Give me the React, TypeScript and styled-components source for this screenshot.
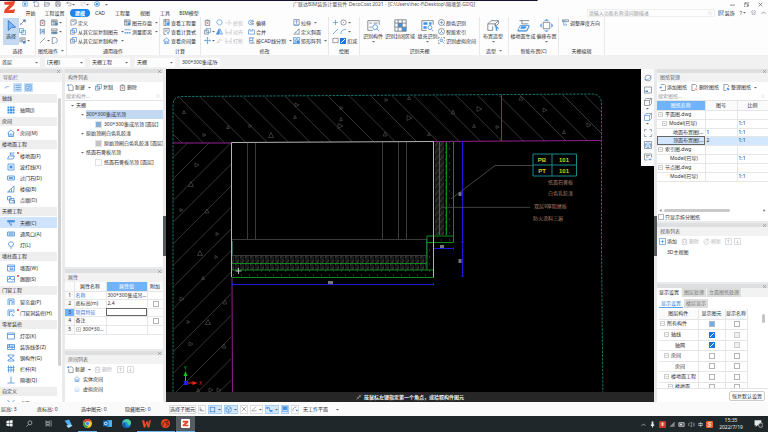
import React from "react";
import styled, { createGlobalStyle, css } from "styled-components";

const Global = createGlobalStyle`
  *, *::before, *::after { box-sizing: border-box; }
  body { margin: 0; background: #f0f0f0; }
  body, button, input, select, table {
    font-family: "Noto Sans", "Noto Sans CJK SC", sans-serif;
    font-size: 5px;
    line-height: 8px;
    color: #2e2e2e;
  }
  button { border: 0; background: none; padding: 0; margin: 0; white-space: nowrap; }
  ul { list-style: none; margin: 0; padding: 0; }
`;

/* ---------- icons: grey strokes, blue strokes, blue fill ---------- */

type Glyph = { g?: string; b?: string; f?: string; r?: string };
const glyphs: Record<string, Glyph> = {
  pin: { b: "M2 2h12v12H2z", f: "M8 4l4 4h-2v4H6V8H4z" },
  file: { g: "M6 2h5l3 3v10H4V7", f: "M1 1h4v4H1z" },
  folder: { g: "M1 3h5l2 2h6v3M1 3v11h11l3-6H4l-3 6" },
  save: { g: "M2 2h10l2 2v10H2zM5 2v4h6V2M4 14V9h8v5" },
  undo: { g: "M5 2L2 5l3 3M2 5h8a4 4 0 010 8H6" },
  redo: { g: "M11 2l3 3-3 3M14 5H6a4 4 0 000 8h4" },
  globe: { b: "M8 1a7 7 0 100 14A7 7 0 008 1M3 10c4 2 8-1 10-6M4 4c3 0 6 4 7 9", f: "M5 6h6v5H5z" },
  pick: { g: "M2 14L13 3M9 3h5v5M3 9l4 4", f: "M10 1h5v5h-5z" },
  copy: { b: "M1 1h9v9H1zM6 6h9v9H6z" },
  copyg: { g: "M1 5h9v9H1z", b: "M5 1h10v9H5z" },
  list: { g: "M2 2h12v9H2zM4 5h8M4 8h5", f: "M9 9h6v6H9z" },
  trash: { g: "M2 4h12M6 4V2h4v2M3 4v11h10V4", r: "M6 7l4 5M10 7l-4 5" },
  trashg: { g: "M2 4h12M6 4V2h4v2M3 4v11h10V4M6 7v5M10 7v5" },
  align: { g: "M3 1v14M12 1v14", b: "M3 4h9M3 11h9", f: "M6 6h5v3H6z" },
  line: { g: "M2 14L14 2" },
  grid4: { g: "M1 2h13v12H1zM1 6h13M5 2v12M9 2v12", f: "M9 8h6v6H9z" },
  layers: { g: "M1 2h13v4H1zM1 9h13v4H1z", f: "M3 9h10v4H3z" },
  doc: { g: "M3 1h7l4 4v4M3 1v14h5", b: "M10 11l2 3 3-5" },
  define: { g: "M2 2h12v5M2 2v12h4M5 5h6", b: "M8 13l6-6 1 2-5 5z" },
  db: { g: "M1 2h13v12H1zM1 6h13M5 2v12", f: "M8 8h6v6H8z" },
  ruler: { b: "M1 4h14M1 11h14M3 9v4M8 9v4M13 9v4" },
  calc: { g: "M2 1h12v9M2 1v14h5M2 5h12M6 1v14", f: "M8 8h7v7H8z" },
  calc2: { g: "M2 1h12v9M2 1v14h5M5 5h6M5 8h3", b: "M9 10h5M9 13h5" },
  house: { b: "M1 8l7-6 7 6M3 7v8h10V7M6 15v-5h4v5" },
  rotate: { b: "M6 2a6 6 0 104 0M6 2h4" },
  mirror: { b: "M7 2v12H1zM9 2l6 12H9z", f: "M7 2v12H1z" },
  move: { b: "M8 1v14M1 8h14M6 3l2-2 2 2M6 13l2 2 2-2M3 6L1 8l2 2M13 6l2 2-2 2" },
  trim: { g: "M1 9h5M9 9h6M9 2v12" },
  brk: { g: "M2 2v12h4M14 2v12h-4M2 10h12" },
  cut: { g: "M1 12h6M9 4L5 14M10 7h5" },
  offset: { b: "M13 3H6a5 5 0 000 10h7", g: "M14 6H8a2 2 0 000 4h6" },
  merge: { b: "M1 14V5l4-2v4h5V3l5 2v9z" },
  split: { g: "M2 2h12M4 14h11", b: "M4 2v12M11 2v12M4 8h7" },
  stretch: { b: "M2 14h12M8 11V4M5 6l3-3 3 3", g: "M2 1h12v13H2z" },
  slope: { g: "M1 14h14M3 12L14 2v12", b: "M5 11l3-1" },
  array: { b: "M1 1h6v6H1zM9 1h6v6H9zM1 9h6v6H1zM9 9h6v6H1z", f: "M9 9h6v6H9z" },
  plus: { b: "M8 2v12M2 8h12" },
  circle: { g: "M8 2a6 6 0 100 12A6 6 0 008 2M8 7v2" },
  bline: { b: "M2 14L14 2" },
  fold: { b: "M5 7h9M2 10h5" },
  arc: { b: "M2 14Q2 3 14 3" },
  rect: { g: "M2 3h12v10H2z" },
  recog: { g: "M8 1a7 7 0 100 14A7 7 0 008 1", b: "M8 4v8M4 8h8M11 11l4 4" },
  index: { g: "M8 1a7 7 0 100 14A7 7 0 008 1", b: "M8 4v5M5 11l3-3 3 3" },
  virt: { g: "M1 4V1h3M12 1h3v3M4 15H1v-3M7 1h2M1 7v2M15 7v2", b: "M5 5h5v5H5zM10 10l5 5" },
  big1: { g: "M15 7V2H1v12h6M3 5h3M8 5h5M3 10h3", b: "M10 7a3 3 0 100 6 3 3 0 000-6M12 12l3 3" },
  big2: { g: "M1 1h14v14H1zM1 5h14M1 10h14M5 1v14M10 1v14", f: "M5 5h5v5H5zM10 10h5v5h-5z" },
  big3: { g: "M15 7V2H1v12h6", f: "M3 4h5v3H3zM10 4h3v3h-3zM3 9h4v3H3z", b: "M11 8a2.500 2.500 0 100 5 2.500 2.500 0 000-5M13 13l2 2" },
  big4: { g: "M1 14V6l4-4h9v4L10 9V6L14 2M1 6h9v2M1 14h6V9", f: "M10 7l5 5-3 0 1 3-2-1z" },
  big5: { g: "M3 2h12M6 2v4h8", b: "M4 8h11l-3 6H1zM1 14v1h11l3-6", f: "M5 9h7l-2 3H4z" },
  big6: { g: "M4 4h8v8H4z", f: "M8 0l3 2H5zM8 16l3-2H5zM0 8l2-3v6zM16 8l-2-3v6z" },
  thick: { g: "M1 2h14v4H1z", b: "M4 6v8h6M8 10l3 4M3 2v4M7 2v4" },
  gridb: { f: "M1 1h4v4H1zM6 1h4v4H6zM11 1h4v4h-4zM1 6h4v4H1zM6 6h4v4H6zM11 6h4v4h-4zM1 11h4v4H1zM6 11h4v4H6zM11 11h4v4h-4z" },
  floor: { b: "M5 2h10M7 2v4h7M4 8h11l-3 6H1z" },
  ring: { b: "M2 2h12v12H2z", f: "M5 5h6v6H5z" },
  slab: { b: "M1 4h14v8H1zM4 7h8v2H4z" },
  stair: { b: "M1 14L14 2v12zM5 11v3M9 7v7" },
  dots: { b: "M1 1h7v7H1zM5 5h9v9H5z", g: "M9 9h6v6" },
  ceil: { b: "M1 3h14M1 6h14M1 3v3M15 3v3M5 6v4h5", f: "M2 3h12v3H2zM6 11h4v2H6z" },
  vent: { b: "M1 4h14v8H1zM3 6h10M3 8h10M3 10h10" },
  rows: { b: "M1 3h2M5 3h10M1 8h2M5 8h10M1 13h2M5 13h10" },
  lamp: { b: "M8 2a4 4 0 00-2 8v2h4v-2a4 4 0 00-2-8M7 15h2" },
  wall: { b: "M1 2h14v12H1zM1 5h14M6 8h6v3H6z" },
  card: { b: "M2 2h12v12H2zM5 6h6M5 10l2 1 4-3" },
  skirt: { b: "M1 3h14v11H1zM1 10l5-3 4 3 5-2", f: "M4 5h4v3H4z" },
  curtain: { b: "M2 14V2h12v12M5 14V5h5v9M10 8h4" },
  door: { b: "M2 14V2h12v6M5 14V5h6M9 9l5 5M9 12l3 3" },
  strip: { b: "M1 2h14v12H1zM1 5h14" },
  mold: { b: "M1 3h14v10H1zM1 6h14M1 9h14M5 3v6M10 6v7" },
  steel: { b: "M2 2h12v2L9 7v3l5 2v2H2v-2l5-2V7L2 4z" },
  rail: { b: "M3 1v14M8 1v14M13 1v14M1 5h14M1 10h14" },
  part: { b: "M8 1v13M1 14h14" },
  point: { b: "M1 2l7 7 7-7M8 9v6" },
  up: { g: "M1 1h14v14H1zM8 12V4M5 7l3-3 3 3" },
  down: { g: "M1 1h14v14H1zM8 4v8M5 9l3 3 3-3" },
  refresh: { g: "M14 8a6 6 0 11-2-4M12 1v4H8M5 8l2 2 4-4" },
  add: { b: "M1 1h14v14H1zM8 4v8M4 8h8" },
  search: { g: "M7 2a5 5 0 100 10A5 5 0 007 2M11 11l4 4" },
  sheetadd: { g: "M4 1h8l3 3v11H4", b: "M1 8h6M4 5v6" },
  sheetdel: { g: "M8 15H2V1h8l3 3v4", r: "M9 10l5 5M14 10l-5 5" },
  sheetfix: { g: "M8 15H2V1h8l3 3v3", f: "M8 11l3-3 4 4-3 3z" },
  orbit: { g: "M8 2a6 6 0 100 12A6 6 0 008 2", b: "M1 11c3 3 14-3 13-8" },
  sheet: { g: "M1 2h14v12H1z", f: "M3 9h5v3H3z" },
  cube: { g: "M1 5h10v10H1zM1 5l3-4h11v10l-4 4M11 5l4-4" },
  cubeb: { b: "M1 5h10v10H1zM1 5l3-4h11v10l-4 4M11 5l4-4" },
  frame: { g: "M1 5V1h4M11 1h4v4M15 11v4h-4M5 15H1v-4" },
  boxed: { g: "M1 1h14v14H1z", b: "M8 3l5 3v5l-5 3-5-3V6zM3 6l5 3 5-3M8 9v5" },
  panel: { g: "M1 2h14v7M1 2v12h6M4 5h8M4 8h5", b: "M9 13h6M12 10v5" },
  ortho: { g: "M3 2v11h11M3 9h4v4" },
  sq: { b: "M3 3h10v10H3z", f: "M2 2h3v3H2zM11 2h3v3h-3zM2 11h3v3H2zM11 11h3v3h-3z" },
  hex: { b: "M8 1l6 3v8l-6 3-6-3V4zM2 4l6 4 6-4M8 8v7" },
  cross: { g: "M2 2l12 12M14 2L2 14" },
  angle: { g: "M13 2L2 13h13" },
  snap: { b: "M2 4h6v7h6", f: "M1 2h4v4H1zM9 9h6v4H9z" },
  inset: { b: "M1 1h14v14H1z", f: "M3 2h10v9H3z" },
  curve: { g: "M2 14C2 6 6 3 12 3M10 9l4 4", f: "M11 10h4v4h-4z" },
  shirt: { g: "M5 2L1 5l2 3 1-1v7h8V7l1 1 2-3-4-3-3 2z" },
};

const Svg = styled.svg<{ $s: number; $dim?: boolean }>`
  width: ${(p) => p.$s}px;
  height: ${(p) => p.$s}px;
  flex: none;
  display: block;
  opacity: ${(p) => (p.$dim ? 0.4 : 1)};
`;

const Icon = ({ n, s = 7, dim, w = 1.6 }: { n: string; s?: number; dim?: boolean; w?: number }) => {
  const k = glyphs[n];
  return (
    <Svg $s={s} $dim={dim} viewBox="0 0 16 16" fill="none" strokeWidth={w} aria-hidden>
      {k.f && <path d={k.f} fill="#3f93e6" />}
      {k.g && <path d={k.g} stroke="#6c7680" />}
      {k.b && <path d={k.b} stroke="#4a90d9" />}
      {k.r && <path d={k.r} stroke="#e0564c" />}
    </Svg>
  );
};

const Caret = () => (
  <Svg $s={3} viewBox="0 0 6 6" aria-hidden>
    <path d="M0 2h6L3 5z" fill="#666" />
  </Svg>
);

const CloseX = ({ s = 3 }: { s?: number }) => (
  <Svg $s={s} viewBox="0 0 6 6" aria-hidden>
    <path d="M0 0l6 6M6 0L0 6" stroke="#777" strokeWidth="1" />
  </Svg>
);

/* ---------- page frame ---------- */

const Page = styled.div`
  height: 100vh;
  display: flex;
  flex-direction: column;
  overflow: hidden;
`;

const Header = styled.header`
  display: grid;
  grid-template-columns: 22px 1fr auto 1fr 22px;
  grid-template-rows: 8px 9px;
  background: linear-gradient(#15122e, #15122e) 0 0 / 70% 1px no-repeat, #fdfdfe;
`;
const Logo = styled.div`
  grid-row: 1 / 3;
  padding: 1px 0 0 3px;
`;
const Quick = styled.div`
  display: flex;
  align-items: center;
  gap: 5px;
`;
const QuickPair = styled.span`
  display: flex;
  align-items: center;
`;
const Title = styled.div`
  color: #555;
  line-height: 9px;
  white-space: nowrap;
`;
const WinButtons = styled.div`
  grid-column: 4 / 6;
  display: flex;
  justify-content: flex-end;
  align-items: center;
  gap: 9px;
  padding-right: 5px;
`;
const TabRow = styled.nav`
  grid-column: 2 / 6;
  display: flex;
  align-items: center;
  padding-right: 2px;
`;
const MenuTab = styled.button<{ $w: number; $on?: boolean }>`
  width: ${(p) => p.$w}px;
  height: 8px;
  border-radius: 4px;
  text-align: center;
  ${(p) => p.$on && css`background: #1a87f0; color: #fff; font-weight: 700;`}
`;
const TopSearch = styled.label`
  width: 128px;
  height: 8px;
  margin-left: auto;
  display: flex;
  align-items: center;
  border: 1px solid #eee;
  padding: 0 2px 0 1px;
`;
const TopTools = styled.div`
  display: flex;
  align-items: center;
  gap: 5px;
  padding-left: 3px;
`;

/* ---------- ribbon ---------- */

const Ribbon = styled.div`
  display: flex;
  height: 38px;
  background: #fdfdfe;
`;
const Group = styled.section<{ $w: number }>`
  width: ${(p) => p.$w}px;
  flex: none;
  display: flex;
  flex-direction: column;
  border-right: 1px solid #e8e8ea;
  padding-top: 1px;
`;
const GroupBody = styled.div`
  display: flex;
  flex: 1;
  padding-left: 3px;
`;
const GroupName = styled.div`
  height: 9px;
  display: flex;
  justify-content: center;
  align-items: center;
  gap: 3px;
`;
const Stack = styled.div<{ $w: number }>`
  width: ${(p) => p.$w}px;
  flex: none;
`;
const ToolBtn = styled.button<{ $dim?: boolean }>`
  height: 9px;
  display: flex;
  align-items: center;
  gap: 1px;
  color: ${(p) => (p.$dim ? "#b5b5b5" : "#2e2e2e")};
`;
const Label = styled.span`
  padding-right: 2px;
`;
const BigBtn = styled.button<{ $w: number; $on?: boolean }>`
  width: ${(p) => p.$w}px;
  height: 27px;
  flex: none;
  display: flex;
  flex-direction: column;
  align-items: center;
  padding-top: 1px;
  background: ${(p) => (p.$on ? "#c4daf3" : "transparent")};
`;
const TickLabel = styled.label`
  height: 9px;
  display: flex;
  align-items: center;
  gap: 1px;
  white-space: nowrap;
`;

const Tick = styled.input.attrs({ type: "checkbox" })<{ $part?: boolean }>`
  appearance: none;
  display: block;
  width: 6px;
  height: 6px;
  margin: 0;
  flex: none;
  border: 1px solid #b4b4b4;
  background: ${(p) => (p.$part ? "#6fb0f3" : "#fff")};
  &:disabled { background: #f0f0f0; border-color: #ccc; }
  &:checked {
    border-color: #1677e0;
    background: linear-gradient(135deg, #1677e0 40%, #fff 40% 55%, #1677e0 55%);
  }
`;

const Tool = ({ i, t, c, dim }: { i: string; t?: string; c?: boolean; dim?: boolean }) => (
  <ToolBtn $dim={dim} aria-label={t ?? i}>
    <Icon n={i} dim={dim} />
    {t && <Label>{t}</Label>}
    {c && <Caret />}
  </ToolBtn>
);
const Big = ({ i, t, w, c }: { i: string; t: string; w: number; c?: boolean }) => (
  <BigBtn $w={w}>
    <Icon n={i} s={13} w={1} />
    <span>{t}</span>
    {c && <Caret />}
  </BigBtn>
);

const SelectorBar = styled.div`
  height: 14px;
  display: flex;
  align-items: center;
  gap: 5px;
  background: #f1f1f1;
`;
const SelectWrap = styled.span<{ $w: number }>`
  width: ${(p) => p.$w}px;
  height: 9px;
  display: grid;
  grid-template-columns: 1fr 5px;
  align-items: center;
  background: #fdfdfd;
  & > select { grid-area: 1 / 1 / 2 / 3; }
  & > svg { grid-area: 1 / 2; pointer-events: none; }
`;
const Select = styled.select`
  appearance: none;
  border: 0;
  background: none;
  padding: 0 0 0 2px;
  height: 8px;
  width: 100%;
`;
const Drop = ({ t, w = 40, name }: { t: string; w?: number; name: string }) => (
  <SelectWrap $w={w}>
    <Select aria-label={name}><option>{t}</option></Select>
    <Caret />
  </SelectWrap>
);

/* ---------- panels ---------- */

const Main = styled.main`
  flex: 1;
  min-height: 0;
  display: grid;
  grid-template-columns: 62px 98px minmax(0, 1fr) 111px;
  column-gap: 3px;
  background:
    linear-gradient(#55585c, #55585c) 163px 147px / calc(100% - 274px) 40px no-repeat,
    #e9eaec;
`;
const Column = styled.div`
  display: flex;
  flex-direction: column;
  min-height: 0;
  min-width: 0;
  gap: 2px;
`;
const PanelBox = styled.section<{ $h?: number }>`
  display: flex;
  flex-direction: column;
  min-height: 0;
  overflow: hidden;
  background: #fff;
  ${(p) => (p.$h ? css`height: ${p.$h}px; flex: none;` : css`flex: 1;`)}
`;
const CloseStrip = styled.div`
  height: 4px;
  flex: none;
  display: flex;
  align-items: center;
  justify-content: flex-end;
  padding-right: 2px;
  background: #dedfe1;
`;
const PanelTitle = styled.h2`
  margin: 0;
  height: 9px;
  flex: none;
  padding-left: 3px;
  font-size: 5px;
  line-height: 9px;
  font-weight: 400;
  color: #666;
  background: #f2f2f2;
`;
const Panel = ({ title, h, children }: { title?: string; h?: number; children: React.ReactNode }) => (
  <PanelBox $h={h}>
    <CloseStrip><CloseX /></CloseStrip>
    {title && <PanelTitle>{title}</PanelTitle>}
    {children}
  </PanelBox>
);
const Bar = styled.div<{ $gap?: number }>`
  height: 10px;
  flex: none;
  display: flex;
  align-items: center;
  gap: ${(p) => p.$gap ?? 4}px;
  padding: 0 2px;
`;
const SearchRow = styled.label`
  height: 9px;
  flex: none;
  display: flex;
  align-items: center;
  padding: 0 3px 0 1px;
  border-bottom: 1px solid #e3e3e3;
`;
const SearchBox = styled.input`
  flex: 1;
  min-width: 0;
  height: 8px;
  border: 0;
  padding: 0;
  background: none;
  &::placeholder { color: #999; }
`;

/* ---------- navigation column ---------- */

const NavToggle = styled.button<{ $on?: boolean }>`
  width: 9px;
  height: 9px;
  display: grid;
  place-items: center;
  background: ${(p) => (p.$on ? "#c6dff8" : "transparent")};
`;
const NavScroll = styled.div`
  flex: 1;
  min-height: 0;
  overflow: hidden;
  display: flex;
  justify-content: space-between;
`;
const NavList = styled.ul`
  width: 57px;
`;
const NavHead = styled.li`
  height: 12px;
  padding: 2px 0 1px;
  line-height: 9px;
  text-indent: 2px;
  background: #eee content-box;
`;
const NavItem = styled.button<{ $on?: boolean }>`
  width: 100%;
  height: 11px;
  display: flex;
  align-items: center;
  gap: 1px;
  padding-left: 7px;
  background: ${(p) => (p.$on ? "#cfe4fc" : "transparent")};
`;
const RedDot = styled.i<{ $on?: boolean }>`
  width: 2px;
  height: 2px;
  margin: 0 0 6px 1px;
  border-radius: 1px;
  background: ${(p) => (p.$on ? "#e5342b" : "transparent")};
`;
const ScrollThumb = styled.div`
  width: 3px;
  height: 268px;
  margin: 6px 1px 0 0;
  border-radius: 2px;
  background: #d0d0d0;
`;

const nav: [string, [string, string, boolean?][]][] = [
  ["轴线", [["gridb", "轴网(J)"]]],
  ["房间", [["house", "房间(M)", true]]],
  ["楼地面工程", [["floor", "楼地面(F)", true], ["ring", "波打线(X)"], ["slab", "过门石(D)"], ["stair", "楼梯(B)"], ["dots", "点缀(O)"]]],
  ["天棚工程", [["ceil", "天棚(C)"], ["vent", "通风口(A)"], ["lamp", "灯(L)"]]],
  ["墙柱面工程", [["wall", "墙面(W)"], ["skirt", "踢脚(S)", true]]],
  ["门窗工程", [["curtain", "窗帘盒(P)"], ["door", "门窗洞装修(H)", true]]],
  ["零星装修", [["strip", "灯带(K)"], ["mold", "装饰线条(Z)"], ["steel", "钢构件(G)"], ["rail", "栏杆(R)"], ["part", "隔墙(Q)"]]],
  ["自定义", [["point", "点(I)"]]],
];

/* ---------- component tree ---------- */

const Tree = styled.ul`
  flex: 1;
`;
const TreeRow = styled.li<{ $lvl: number }>`
  height: ${(p) => (p.$lvl === 2 ? 10 : 9)}px;
  display: flex;
  align-items: center;
  gap: 2px;
  padding-left: ${(p) => [6, 16, 30][p.$lvl]}px;
  white-space: nowrap;
`;
const TreeText = styled.span<{ $on?: boolean }>`
  flex: 1;
  height: 9px;
  line-height: 9px;
  background: ${(p) => (p.$on ? "#c3d9f2" : "transparent")};
`;
const Swatch = styled.i<{ $c: string }>`
  flex: none;
  width: 7px;
  height: 7px;
  background: ${(p) => p.$c};
  border: 1px solid #e2e2e2;
`;

/* ---------- tables ---------- */

const Table = styled.table`
  width: 100%;
  border-collapse: collapse;
  table-layout: fixed;
  line-height: 7px;
  & th { font-weight: 400; }
`;
const Cell = styled.td<{ $blue?: boolean; $pad?: number; $mark?: boolean }>`
  border: 1px solid #e6e6e6;
  border-width: 0 1px 1px 0;
  padding: 0 0 0 ${(p) => p.$pad ?? 1}px;
  white-space: nowrap;
  overflow: hidden;
  color: ${(p) => (p.$blue ? "#2f6fdc" : "#2e2e2e")};
  ${(p) => p.$mark && css`outline: 1px solid #666; outline-offset: -1px;`}
  & > input { margin: 0 auto; }
`;
const HeadCell = styled.th<{ $on?: boolean }>`
  height: 9px;
  padding: 0;
  border-right: 1px solid #e6e6e6;
  border-bottom: 1px solid #e6e6e6;
  background: ${(p) => (p.$on ? "#71b3fb" : "#fbfbfb")};
  color: ${(p) => (p.$on ? "#fff" : "#2e2e2e")};
`;
const DenseRow = styled.tr<{ $on?: boolean }>`
  height: 8px;
  &:nth-child(even) { height: 9px; }
  background: ${(p) => (p.$on ? "#d2e7fd" : "transparent")};
`;
const NumCell = styled(Cell)<{ $on?: boolean }>`
  text-align: center;
  background: ${(p) => (p.$on ? "#71b3fb" : "#fafafa")};
`;
const Twig = styled.span<{ $l: number }>`
  display: inline-flex;
  align-items: center;
  gap: 2px;
  height: 7px;
  padding-left: ${(p) => p.$l}px;
`;
const Minus = ({ plus }: { plus?: boolean }) => (
  <Svg $s={5} viewBox="0 0 10 10" fill="none" stroke="#999" aria-hidden>
    <path d={plus ? "M1 1h8v8H1zM3 5h4M5 3v4" : "M1 1h8v8H1zM3 5h4"} />
  </Svg>
);

const RoomRow = styled.li`
  height: 10px;
  display: flex;
  align-items: center;
  gap: 3px;
  padding-left: 9px;
`;

/* ---------- canvas ---------- */

const CanvasArea = styled.div`
  position: relative;
  display: flex;
  flex-direction: column;
  min-height: 0;
  background: #000;
`;
const Drawing = styled.svg`
  flex: 1;
  min-height: 0;
  width: 100%;
  display: block;
`;
const Hint = styled.div`
  height: 10px;
  display: flex;
  align-items: center;
  justify-content: center;
  gap: 2px;
  background: #262626;
  color: #f2f2f2;
  font-weight: 700;
`;
const ViewTools = styled.div`
  position: absolute;
  top: 0;
  right: 0;
  width: 13px;
  height: 97px;
  display: flex;
  flex-direction: column;
  align-items: center;
  justify-content: space-between;
  padding: 5px 0;
  background: #fafafa;
`;
const ViewBtn = styled.button`
  display: flex;
  flex-direction: column;
  align-items: center;
  gap: 1px;
`;

const range = (n: number) => Array.from({ length: n }, (_, i) => i);
const stones: [number, number, number][] = [
  [184, 112, 3], [204, 135, 3], [228, 127, 3], [250, 126, 3], [271, 135, 5], [296, 105, 4], [295, 117, 3],
  [341, 108, 3], [341, 119, 3], [339, 126, 5], [385, 134, 4], [386, 100, 3], [409, 98, 3], [408, 118, 5],
  [453, 112, 4], [478, 109, 5], [474, 126, 3], [497, 127, 3], [521, 98, 4], [544, 110, 4], [564, 132, 3],
  [588, 125, 4], [429, 134, 3], [196, 165, 4], [191, 184, 5], [181, 210, 3], [207, 211, 4], [217, 234, 3],
  [200, 253, 5], [216, 257, 3], [203, 278, 3], [181, 299, 4], [225, 302, 4], [188, 322, 3], [208, 322, 5],
  [190, 344, 4], [224, 346, 4], [210, 390, 4], [198, 390, 3], [218, 390, 4],
];

const Cad = () => (
  <Drawing viewBox="166 69 489 323" preserveAspectRatio="xMinYMin slice" fill="none">
    <defs>
      <clipPath id="slab"><path d="M173 104q0-7 8-7L592 95q9 0 9 9v37L173 143z" /></clipPath>
      <clipPath id="pier"><path d="M173 143h58v260h-58z" /></clipPath>
      <pattern id="brick" width="5" height="7" patternUnits="userSpaceOnUse">
        <path d="M1 0v7M3 0v7M0 6l4-5" stroke="#555" strokeWidth=".6" />
      </pattern>
      <pattern id="sand" width="8" height="7" patternUnits="userSpaceOnUse">
        <path d="M1 2h1M5 5h1" stroke="#666" strokeWidth=".8" />
      </pattern>
    </defs>
    <g stroke="#4c4c4c" strokeWidth=".7">
      <g clipPath="url(#slab)">
        {range(22).map((i) => <path key={i} d={`M${134 + i * 21.45} 95l50 50`} />)}
      </g>
      <g clipPath="url(#pier)">
        {range(14).map((i) => <path key={i} d={`M171 ${159.5 + i * 21.6}l62-62`} />)}
      </g>
      {stones.map(([x, y, s], i) => (
        <path key={i} d={i % 2 ? `M${x - 1} ${y - s / 2}l${s} ${s / 2}-${s} ${s / 2}z` : `M${x} ${y - s / 2}l${s / 2} ${s}h-${s}z`} />
      ))}
    </g>
    <path d="M173 403V105q0-8 8-8.500L592 94q9 0 9.500 9V250L603 403" stroke="#14807c" strokeWidth=".9" strokeDasharray="2.500 1.200" />
    <path d="M173 143h58M501.500 95v46M433 141.500l168-1M232 277l.5 126" stroke="#94208f" />
    <path d="M247.500 143v96M255.500 143v96M382.500 142v97M398.500 142v97M406.500 142v97M232 239.500h195M232 255.500h195" stroke="#4a4a4a" strokeWidth=".8" />
    <path d="M232.500 241v14M426.500 239v16" stroke="#2c6864" strokeWidth=".8" />
    <path d="M232 256h195v14H232z" fill="url(#brick)" />
    <path d="M232 270h202v7H232zM446 142h7v93h-7zM427 236h26v6h-26zM428 243h6v26h-6z" fill="url(#sand)" />
    <path d="M434 142h13v93h-13z" fill="url(#brick)" />
    <path d="M232 263.500h195M232 270h202M232 277.500h202M427 242v28M439.500 142v93M446.500 142v93M453.500 142v100.500H427V236h26" stroke="#0c8a1a" />
    <path d="M231.500 277V142.500l202-1V277" stroke="#b4b4b4" />
    <path d="M462.500 141v136M232 284.500h202M434 248.500h20M461 242h3M461 276h3M232.500 283v3M433.500 283v3M453.500 247v3" stroke="#1a1ad8" />
    <path d="M328 281h5v3h-5zM440 245h4v3h-4zM458.500 192h3v4h-3zM458.500 259h3v4h-3z" fill="#777" />
    <path d="M451 199l44-33.500h38M442 207.300h88" stroke="#555" strokeWidth=".8" />
    <path d="M533 154h43.500v22H533zM533 165h43.500M552 154v22" stroke="#168a8a" />
    <g fill="#d0d01e" fontSize="6" fontWeight="700" textAnchor="middle" fontFamily="Liberation Sans">
      <text x="542" y="162">PB</text><text x="564" y="162">101</text>
      <text x="542" y="173">PT</text><text x="564" y="173">101</text>
    </g>
    <g fill="#a47c64" fontSize="5">
      <text x="548" y="184">纸面石膏板</text><text x="548" y="195">白色乳胶漆</text>
      <text x="534" y="208">双层9厚阻燃板</text><text x="533" y="220">防火涂料三遍</text>
    </g>
    <path d="M238.500 268v6M235.500 271h6" stroke="#ddd" strokeWidth=".8" />
    <path d="M185.500 382v-7" stroke="#12c41c" /><path d="M185.500 371l2 5h-4z" fill="#12c41c" />
    <path d="M187 383h6" stroke="#e8261a" /><path d="M197.500 383l-5 2v-4z" fill="#e8261a" />
    <path d="M184 381h4v4h-4z" fill="#1c20e0" />
    <text x="184" y="370" fontSize="5" fill="#12c41c">Y</text>
    <text x="199" y="385" fontSize="5" fill="#e8261a">X</text>
  </Drawing>
);

/* ---------- right column ---------- */

const BottomRow = styled.label`
  height: 9px;
  display: flex;
  align-items: center;
  gap: 1px;
  padding-left: 1px;
`;
const HScroll = styled.div`
  height: 4px;
  margin-top: auto;
  display: flex;
  align-items: center;
  justify-content: space-between;
  padding: 0 2px;
  color: #777;
`;
const HThumb = styled.div`
  width: 66px;
  height: 3px;
  margin-right: auto;
  margin-left: 2px;
  border-radius: 2px;
  background: #c9c9c9;
`;
const TabStrip = styled.div<{ $sub?: boolean }>`
  display: flex;
  flex: none;
  height: ${(p) => (p.$sub ? 12 : 9)}px;
  padding: ${(p) => (p.$sub ? "2px 2px 1px" : "0")};
  gap: 1px;
  background: ${(p) => (p.$sub ? "#fff" : "#f2f2f2")};
`;
const SmallTab = styled.button<{ $on?: boolean; $sub?: boolean }>`
  padding: 0 2px;
  background: ${(p) => (p.$on ? "#fff" : "#dcdcdc")};
  color: ${(p) => (p.$on ? (p.$sub ? "#2f7fd8" : "#222") : "#777")};
  border-bottom: 1px solid ${(p) => (p.$on && p.$sub ? "#5aa2ea" : "transparent")};
`;
const LayerArea = styled.div`
  flex: 1;
  min-height: 0;
  overflow: hidden;
  display: flex;
  justify-content: space-between;
  padding: 0 3px 0 2px;
`;
const LayerTable = styled(Table)`
  width: 88px;
  height: fit-content;
`;
const LayerRow = styled.tr`
  height: 10px;
  &:nth-child(even) { height: 11px; }
`;
const VThumb = styled.div`
  width: 3px;
  height: 9px;
  margin-top: 5px;
  border-radius: 2px;
  background: #c4c4c4;
`;
const ResetRow = styled.div`
  height: 14px;
  flex: none;
  display: flex;
  justify-content: flex-end;
  align-items: center;
  padding-right: 3px;
  border-top: 1px solid #e4e4e4;
`;
const ResetBtn = styled.button`
  height: 10px;
  padding: 0 2px;
  border: 1px solid #ccc;
  border-radius: 2px;
`;
const ViewName = styled.div`
  padding: 2px 0 0 10px;
`;

const sheets: [number, string, string, string, boolean?][] = [
  [0, "平面图.dwg", "", ""],
  [1, "Model(已导)", "", "1:1"],
  [2, "地面布置图(...", "1", "1:1"],
  [2, "顶面布置图(...", "2", "1:1", true],
  [0, "索引图.dwg", "", ""],
  [3, "Model(已导)", "", "1:1"],
  [0, "节点图.dwg", "", ""],
  [3, "Model(已导)", "", "1:1"],
];
const layers: [number, string, string, boolean][] = [
  [0, "所有构件", "part", false],
  [4, "轴线", "on", true],
  [15, "轴网", "on", true],
  [4, "房间", "", false],
  [15, "房间", "", false],
  [4, "楼地面工程", "", false],
  [8, "楼地面", "", false],
];

/* ---------- status bar and task bar ---------- */

const Status = styled.footer`
  height: 14px;
  flex: none;
  display: grid;
  grid-template-columns: 36px 44px 44px 44px auto;
  align-items: center;
  justify-content: start;
  padding-left: 1px;
  background: #fafafa;
  white-space: nowrap;
`;
const StatusTools = styled.div`
  display: flex;
  align-items: center;
  gap: 2px;
`;
const ModeBtn = styled.button<{ $on?: boolean }>`
  height: 9px;
  display: flex;
  align-items: center;
  gap: 2px;
  border: 1px solid ${(p) => (p.$on ? "#a9cdf3" : "#ddd")};
  background: ${(p) => (p.$on ? "#d3e7fc" : "#fff")};
`;
const Taskbar = styled.div`
  height: 16px;
  flex: none;
  display: flex;
  align-items: stretch;
  justify-content: space-between;
  background: #20272a;
  color: #e8e8e8;
`;
const TaskGroup = styled.div<{ $gap?: number }>`
  display: flex;
  align-items: center;
  gap: ${(p) => p.$gap ?? 0}px;
`;
const TaskBtn = styled.button<{ $open?: boolean; $on?: boolean }>`
  width: 19px;
  height: 16px;
  margin-right: 1px;
  &:nth-child(2n) { margin-right: 0; }
  display: grid;
  place-items: center;
  background: ${(p) => (p.$on ? "#565c5f" : "transparent")};
  border-bottom: 1px solid ${(p) => (p.$open ? "#6fb6ee" : "transparent")};
`;
const Clock = styled.div`
  width: 30px;
  text-align: center;
  line-height: 7px;
`;

const Z = ({ s }: { s: number }) => (
  <Svg $s={s} viewBox="0 0 14 14" aria-hidden>
    <path d="M1 1l12-1-1 4-6 6 7-1-1 4H1l1-4 5-5H2z" fill="#e8472a" />
  </Svg>
);

const taskIcons: Record<string, React.ReactNode> = {
  开始: <path d="M1 2l6-1v6H1zM8 1l7-1v7H8zM1 8h6v6l-6-1zM8 8h7v7l-7-1z" fill="#f2f2f2" />,
  搜索: <path d="M9 2a4 4 0 110 9 4 4 0 010-9M6 10l-5 5" fill="none" stroke="#ddd" strokeWidth="1.400" />,
  任务视图: <path d="M2 1v3h8V1M2 15v-3h8v3M2 6h8v4H2zM14 1v14" fill="none" stroke="#ccc" strokeWidth="1.400" />,
  桌面: <><path d="M1 3l8-2 4 8-6 2z" fill="#4db2f2" /><path d="M4 12l8-3 3 3-7 4z" fill="#a5dcfa" /></>,
  浏览器: <><circle cx="8" cy="8" r="8" fill="#f6c526" /><path d="M1 4a8 8 0 0114 0l-7 1-3 4z" fill="#e23b2e" /><path d="M1 4a8 8 0 006 12l3-5-5-1z" fill="#2ea24c" /><circle cx="8" cy="8" r="3.500" fill="#3b82f0" stroke="#fff" /></>,
  邮件: <><path d="M7 2h9v12H7z" fill="#4fb0f0" /><path d="M0 3h10v10H0z" fill="#0f6cbd" /><circle cx="5" cy="8" r="2.500" fill="none" stroke="#fff" strokeWidth="1.500" /></>,
  网页: <><circle cx="8" cy="8" r="8" fill="#1f8fd8" /><path d="M1 6c3-8 15-7 15 1 0 4-6 4-6 2 1-4-6-5-9-3z" fill="#4fd39a" /><path d="M6 7c-2 5 3 8 7 7-6 4-12 0-12-6z" fill="#0e5ba8" /></>,
  文字: <path d="M0 2h4l2 8 2-6h3l1 6 1-8h3l-3 13h-3l-2-6-2 6H3z" fill="#f0482c" />,
  造价: <><circle cx="8" cy="8" r="8" fill="#e8461f" /><path d="M3 12c0-6 4-9 10-8-4 1-4 3-3 5 1-1 3-1 4 0-2 0-3 4-6 4" fill="none" stroke="#40150a" strokeWidth="1.500" /></>,
  装饰: <><rect width="16" height="16" rx="2" fill="#fff" /><path d="M3 3h10v3l-5 4h5v3H3v-3l5-4H3z" fill="#e8472a" /></>,
};

export default function App() {
  return (
    <Page>
      <Global />
      <Header>
        <Logo><Z s={13} /></Logo>
        <Quick>
          <Icon n="pin" s={6} /><Icon n="file" s={6} /><Icon n="folder" s={6} /><Icon n="save" s={6} />
          <QuickPair><Icon n="undo" s={6} /><Caret /></QuickPair>
          <QuickPair><Icon n="redo" s={6} dim /><Caret /></QuickPair>
          <Icon n="globe" s={6} /><Caret />
        </Quick>
        <Title>广联达BIM装饰计量软件 DecoCost 2021 - [C:\Users\hec-f\Desktop\隔墙第.GDQ]</Title>
        <WinButtons>
          {["M0 5h8", "M0 3h6v5H0zM2 3V0h6v6H6", "M1 1l6 6M7 1L1 7"].map((d, i) => (
            <button key={d} aria-label={["最小化", "还原", "关闭"][i]}>
              <Svg $s={5} viewBox="0 0 8 8" fill="none" stroke="#555"><path d={d} /></Svg>
            </button>
          ))}
        </WinButtons>
        <TabRow>
          <MenuTab $w={17}>开始</MenuTab>
          <MenuTab $w={31}>工程设置</MenuTab>
          <MenuTab $w={20} $on>建模</MenuTab>
          <MenuTab $w={20}>CAD</MenuTab>
          <MenuTab $w={25}>工程量</MenuTab>
          <MenuTab $w={20}>视图</MenuTab>
          <MenuTab $w={20}>工具</MenuTab>
          <MenuTab $w={28}>BIM模型</MenuTab>
          <TopSearch>
            <SearchBox aria-label="搜索" placeholder="请输入功能名称或问题描述" />
            <Icon n="search" s={4} dim />
          </TopSearch>
          <TopTools>
            <ToolBtn><Icon n="big3" s={6} /><span>装饰</span></ToolBtn>
            <ToolBtn><span>?</span><Caret /></ToolBtn>
            <Icon n="shirt" s={5} />
            <Svg $s={5} viewBox="0 0 8 8" fill="none" stroke="#555"><path d="M1 6l3-3 3 3" /></Svg>
          </TopTools>
        </TabRow>
      </Header>

      <Ribbon>
        <Group $w={36}>
          <GroupBody>
            <BigBtn $w={16} $on>
              <Svg $s={13} viewBox="0 0 16 16"><path d="M4 2l9 8-5 .5L4 14z" fill="#7fb6f2" stroke="#2a6fc0" /></Svg>
              <span>选择</span>
            </BigBtn>
            <Stack $w={14}><Tool i="pick" /><Tool i="copy" /><Tool i="list" c /></Stack>
          </GroupBody>
          <GroupName>选择</GroupName>
        </Group>
        <Group $w={31}>
          <GroupBody>
            <Stack $w={12}><Tool i="trash" /><Tool i="align" /><Tool i="line" c /></Stack>
            <Stack $w={14}><Tool i="grid4" c /><Tool i="layers" c /><Tool i="doc" /></Stack>
          </GroupBody>
          <GroupName>图纸操作<Caret /></GroupName>
        </Group>
        <Group $w={93}>
          <GroupBody>
            <Stack $w={54}><Tool i="define" t="定义" /><Tool i="copyg" t="从其它层复制图元" c /><Tool i="copyg" t="从其它层复制构件" c /></Stack>
            <Stack $w={34}><Tool i="db" t="图元存盘" c /><Tool i="ruler" t="测量距离" c /></Stack>
          </GroupBody>
          <GroupName>通用操作</GroupName>
        </Group>
        <Group $w={41}>
          <GroupBody>
            <Stack $w={36}><Tool i="calc" t="查看工程量" /><Tool i="calc2" t="查看计算式" /><Tool i="house" t="查看房间量" /></Stack>
          </GroupBody>
          <GroupName>计算</GroupName>
        </Group>
        <Group $w={128}>
          <GroupBody>
            <Stack $w={12}><Tool i="trash" /><Tool i="copyg" c /><Tool i="move" c /></Stack>
            <Stack $w={9}><Tool i="rotate" /><Tool i="mirror" /><Tool i="cut" dim /></Stack>
            <Stack $w={23}><Tool i="trim" t="修剪" dim /><Tool i="brk" t="对齐" dim /><Tool i="brk" t="打断" dim /></Stack>
            <Stack $w={45}><Tool i="offset" t="偏移" /><Tool i="merge" t="合并" /><Tool i="split" t="按CAD线分割" c /></Stack>
            <Stack $w={34}><Tool i="stretch" t="拉伸" c /><Tool i="slope" t="定义斜面" /><Tool i="array" t="矩形阵列" c /></Stack>
          </GroupBody>
          <GroupName>修改</GroupName>
        </Group>
        <Group $w={31}>
          <GroupBody>
            <Stack $w={8}><Tool i="plus" /><Tool i="bline" /><Tool i="rect" /></Stack>
            <Stack $w={19}><Tool i="circle" c /><Tool i="arc" c /><TickLabel><Tick defaultChecked />扣减</TickLabel></Stack>
          </GroupBody>
          <GroupName>绘图</GroupName>
        </Group>
        <Group $w={120}>
          <GroupBody>
            <Big i="big1" t="识别构件" w={20} c />
            <Big i="big2" t="识别封闭区域" w={34} />
            <Big i="big3" t="填充识别" w={21} c />
            <Stack $w={40}><Tool i="recog" t="颜色识别" /><Tool i="index" t="智能索引" /><Tool i="virt" t="识别虚拟房间" /></Stack>
          </GroupBody>
          <GroupName>识别天棚</GroupName>
        </Group>
        <Group $w={29}>
          <GroupBody><Big i="big4" t="布置造型" w={20} c /></GroupBody>
          <GroupName>造型<Caret /></GroupName>
        </Group>
        <Group $w={50}>
          <GroupBody><Big i="big5" t="楼地面生成" w={22} /><Big i="big6" t="偏移布置" w={25} c /></GroupBody>
          <GroupName>智能布置(C)</GroupName>
        </Group>
        <Group $w={46}>
          <GroupBody><Stack $w={40}><Tool i="thick" t="调整厚度方向" /></Stack></GroupBody>
          <GroupName>天棚编辑</GroupName>
        </Group>
      </Ribbon>

      <SelectorBar>
        <Drop name="楼层" t="首层" />
        <Drop name="类别" t="(天棚)" />
        <Drop name="专业" t="天棚工程" />
        <Drop name="构件类型" t="天棚" />
        <Drop name="构件" t="300*300集成吊" />
      </SelectorBar>

      <Main>
        <Column>
          <Panel title="导航栏">
            <Bar $gap={2}>
              <NavToggle aria-label="折叠"><Icon n="fold" s={6} /></NavToggle>
              <NavToggle $on aria-label="列表"><Icon n="rows" s={7} /></NavToggle>
              <NavToggle $on aria-label="图标"><Icon n="card" s={7} /></NavToggle>
            </Bar>
            <NavScroll>
              <NavList>
                {nav.map(([head, items]) => (
                  <React.Fragment key={head}>
                    <NavHead>{head}</NavHead>
                    {items.map(([i, t, dot]) => (
                      <li key={t}>
                        <NavItem $on={t === "天棚(C)"}><Icon n={i} s={8} /><RedDot $on={dot} />{t}</NavItem>
                      </li>
                    ))}
                  </React.Fragment>
                ))}
              </NavList>
              <ScrollThumb />
            </NavScroll>
          </Panel>
        </Column>

        <Column>
          <Panel title="构件列表">
            <Bar $gap={4}><Tool i="file" t="新建" c /><Tool i="copyg" t="复制" /><Tool i="trash" t="删除" /></Bar>
            <SearchRow><SearchBox aria-label="搜索构件" placeholder="搜索构件..." /><Icon n="search" s={4} dim /></SearchRow>
            <Tree>
              <TreeRow $lvl={0}><Caret /><TreeText>天棚</TreeText></TreeRow>
              <TreeRow $lvl={1}><Caret /><TreeText $on>300*300集成吊顶</TreeText></TreeRow>
              <TreeRow $lvl={2}><Swatch $c="#86aed3" /><TreeText>300*300集成吊顶 [面层]</TreeText></TreeRow>
              <TreeRow $lvl={1}><Caret /><TreeText>原始顶刷白色乳胶漆</TreeText></TreeRow>
              <TreeRow $lvl={2}><Swatch $c="#c4c4c4" /><TreeText>原始顶刷白色乳胶漆 [面层]</TreeText></TreeRow>
              <TreeRow $lvl={1}><Caret /><TreeText>纸面石膏板吊顶</TreeText></TreeRow>
              <TreeRow $lvl={2}><Swatch $c="#fff" /><TreeText>纸面石膏板吊顶 [面层]</TreeText></TreeRow>
            </Tree>
          </Panel>
          <Panel title="属性" h={80}>
            <Table>
              <colgroup><col width="9" /><col width="32" /><col width="41" /><col width="16" /></colgroup>
              <thead><tr><HeadCell /><HeadCell>属性名称</HeadCell><HeadCell $on>属性值</HeadCell><HeadCell>附加</HeadCell></tr></thead>
              <tbody>
                <DenseRow><NumCell>1</NumCell><Cell $blue>名称</Cell><Cell>300*300集成吊...</Cell><Cell /></DenseRow>
                <DenseRow><NumCell>2</NumCell><Cell>底标高(m)</Cell><Cell>2.4</Cell><Cell><Tick aria-label="附加底标高" /></Cell></DenseRow>
                <DenseRow><NumCell $on>3</NumCell><Cell $blue>项目特征</Cell><Cell $mark /><Cell /></DenseRow>
                <DenseRow><NumCell>4</NumCell><Cell>备注</Cell><Cell /><Cell><Tick aria-label="附加备注" /></Cell></DenseRow>
                <DenseRow><NumCell>5</NumCell><Cell><Twig $l={0}><Minus plus />300*30...</Twig></Cell><Cell /><Cell /></DenseRow>
              </tbody>
            </Table>
          </Panel>
          <Panel title="房间列表" h={51}>
            <Bar $gap={3}><Tool i="file" t="新建" c /><Tool i="trashg" t="删除" dim /><Tool i="up" dim /><Tool i="down" dim /></Bar>
            <ul>
              <RoomRow><Icon n="house" s={6} />实体房间</RoomRow>
              <RoomRow><Icon n="house" s={6} dim />虚拟房间</RoomRow>
            </ul>
          </Panel>
        </Column>

        <CanvasArea>
          <Cad />
          <Hint>
            <Svg $s={6} viewBox="0 0 16 16" fill="none" stroke="#ddd"><path d="M1 15L15 1M9 2v5h5M2 9h5v5" /></Svg>
            按鼠标左键指定第一个角点，或拾取构件图元
          </Hint>
          <ViewTools>
            {["orbit", "sheet", "cube", "cubeb", "frame", "boxed", "panel"].map((n) => (
              <ViewBtn key={n} aria-label={n}><Icon n={n} s={8} w={1.3} />{n.startsWith("cube") && <Caret />}</ViewBtn>
            ))}
          </ViewTools>
        </CanvasArea>

        <Column>
          <Panel title="图纸管理" h={152}>
            <Bar $gap={2}><Tool i="sheetadd" t="添加图纸" /><Tool i="sheetdel" t="删除图纸" /><Tool i="sheetfix" t="整理图纸" c /></Bar>
            <SearchRow><SearchBox aria-label="搜索图纸" placeholder="搜索图纸..." /><Icon n="search" s={4} dim /></SearchRow>
            <Table>
              <colgroup><col width="48" /><col width="32" /><col width="31" /></colgroup>
              <thead><tr><HeadCell $on>图纸名称</HeadCell><HeadCell>图号</HeadCell><HeadCell>比例</HeadCell></tr></thead>
              <tbody>
                {sheets.map(([l, t, no, sc, on], i) => (
                  <DenseRow key={i} $on={on}>
                    <Cell $mark={on}><Twig $l={[0, 4, 15, 12][l]}>{l < 2 && <Minus />}{t}</Twig></Cell>
                    <Cell>{no}</Cell><Cell>{sc}</Cell>
                  </DenseRow>
                ))}
              </tbody>
            </Table>
            <HScroll>
              <Svg $s={3} viewBox="0 0 6 6"><path d="M5 0v6L1 3z" fill="#777" /></Svg>
              <HThumb />
              <Svg $s={3} viewBox="0 0 6 6"><path d="M1 0v6l4-3z" fill="#777" /></Svg>
            </HScroll>
            <BottomRow><Tick />只显示拆分图纸</BottomRow>
          </Panel>
          <Panel title="视角列表" h={59}>
            <Bar $gap={2}><Tool i="add" t="添加" /><Tool i="trashg" t="删除" dim /><Tool i="refresh" t="刷新" dim /><Tool i="up" dim /><Tool i="down" dim /></Bar>
            <ViewName>3D主视图</ViewName>
          </Panel>
          <Panel>
            <TabStrip><SmallTab $on>显示设置</SmallTab><SmallTab>图层处理</SmallTab><SmallTab>立面图纸处理</SmallTab></TabStrip>
            <TabStrip $sub><SmallTab $on $sub>显示设置</SmallTab><SmallTab $sub>楼层显示</SmallTab></TabStrip>
            <LayerArea>
              <LayerTable>
                <colgroup><col width="39" /><col width="27" /><col width="22" /></colgroup>
                <thead><LayerRow><HeadCell>图层构件</HeadCell><HeadCell>显示图元</HeadCell><HeadCell>显示名称</HeadCell></LayerRow></thead>
                <tbody>
                  {layers.map(([l, t, st, dis], i) => (
                    <LayerRow key={i}>
                      <Cell><Twig $l={l}>{l !== 15 && <Minus />}{t}</Twig></Cell>
                      <Cell><Tick aria-label={`显示图元 ${t}`} defaultChecked={st === "on"} $part={st === "part"} /></Cell>
                      <Cell><Tick aria-label={`显示名称 ${t}`} disabled={dis} /></Cell>
                    </LayerRow>
                  ))}
                </tbody>
              </LayerTable>
              <VThumb />
            </LayerArea>
            <ResetRow><ResetBtn>恢复默认设置</ResetBtn></ResetRow>
          </Panel>
        </Column>
      </Main>

      <Status>
        <span>层高: 3</span><span>底标高: 0</span><span>选中图元: 0</span><span>隐藏图元: 0</span>
        <StatusTools>
          <ModeBtn>选择子图元</ModeBtn>
          <ModeBtn aria-label="正交"><Icon n="ortho" s={6} /></ModeBtn>
          <ModeBtn $on aria-label="对象捕捉"><Icon n="sq" /><Caret /></ModeBtn>
          <ModeBtn $on aria-label="三维捕捉"><Icon n="hex" /><Caret /></ModeBtn>
          <ModeBtn aria-label="交点"><Icon n="cross" s={6} /></ModeBtn>
          <ModeBtn aria-label="角度"><Icon n="angle" s={6} /><Caret /></ModeBtn>
          <ModeBtn $on aria-label="追踪"><Icon n="snap" /><Caret /></ModeBtn>
          <ModeBtn $on aria-label="填充"><Icon n="inset" s={6} /></ModeBtn>
          <ModeBtn aria-label="曲线"><Icon n="curve" s={6} /></ModeBtn>
          <Drop name="工作平面" t="无工作平面" />
        </StatusTools>
      </Status>

      <Taskbar>
        <TaskGroup>
          {Object.entries(taskIcons).map(([name, art], i) => (
            <TaskBtn key={name} aria-label={name} $open={[4, 7, 8, 9].includes(i)} $on={i === 9}>
              <Svg $s={i < 3 ? 7 : 9} viewBox="0 0 16 16">{art}</Svg>
            </TaskBtn>
          ))}
        </TaskGroup>
        <TaskGroup $gap={3}>
          <Svg $s={5} viewBox="0 0 8 8" fill="none" stroke="#ddd"><path d="M1 6l3-3 3 3" /></Svg>
          <Svg $s={7} viewBox="0 0 16 16"><path d="M6 1h4v8H6zM4 8h8v2l-3 2v3H7v-3l-3-2z" fill="#eee" /></Svg>
          <Svg $s={7} viewBox="0 0 16 16"><rect width="16" height="16" rx="2" fill="#e02a2a" /><path d="M4 5h8M8 3v9M4 9h8" stroke="#fff" strokeWidth="1.500" /></Svg>
          <Svg $s={6} viewBox="0 0 16 16"><path d="M1 15L15 1v14z" fill="#888" /></Svg>
          <Svg $s={7} viewBox="0 0 16 16"><path d="M2 4h12v8H2z" fill="none" stroke="#ddd" strokeWidth="2" /><path d="M4 6h6v4H4z" fill="#ddd" /></Svg>
          <Svg $s={7} viewBox="0 0 16 16"><path d="M1 6h3l4-4v12l-4-4H1zM11 5q3 3 0 6M13 3q5 5 0 10" fill="none" stroke="#ccc" /></Svg>
          <span>中</span>
          <Svg $s={7} viewBox="0 0 16 16"><rect width="16" height="16" rx="3" fill="#f0612a" /><path d="M12 4H6q-3 2 1 4h3q3 2-1 4H4" fill="none" stroke="#fff" strokeWidth="2" /></Svg>
          <Clock>15:35<br />2022/7/19</Clock>
          <TaskBtn aria-label="通知"><Svg $s={9} viewBox="0 0 16 16"><path d="M1 2h12v9H6l-3 3v-3H1z" fill="#e8e8e8" /><circle cx="12" cy="11" r="4" fill="#333" stroke="#ddd" /></Svg></TaskBtn>
        </TaskGroup>
      </Taskbar>
    </Page>
  );
}
